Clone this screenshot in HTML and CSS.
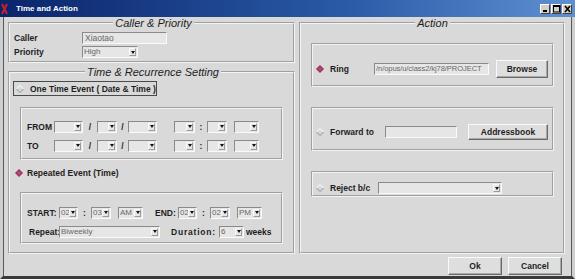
FILE: index.html
```html
<!DOCTYPE html>
<html lang="en">
<head>
    <meta charset="UTF-8">
    <title>Time and Action</title>
    <link rel="stylesheet" href="styles.css">
</head>
<body>
<div class="window">
    <div class="titlebar">
        <svg class="app-icon" width="7" height="12" viewBox="0 0 7 12"><path d="M1 1 L6 11 M6 1 L1 11" stroke="#c8202a" stroke-width="2"/></svg>
        <span class="title">Time and Action</span>
        <div class="wm-buttons">
            <span class="wm-btn"><svg width="7" height="8" viewBox="0 0 7 8"><rect x="1" y="5" width="4" height="2" fill="#000"/></svg></span>
            <span class="wm-btn"><svg width="7" height="8" viewBox="0 0 7 8"><rect x="0.5" y="0.5" width="6" height="6.5" fill="none" stroke="#000"/><rect x="0" y="0" width="7" height="2" fill="#000"/></svg></span>
            <span class="wm-btn"><svg width="7" height="8" viewBox="0 0 7 8"><path d="M1 1 L6 7 M6 1 L1 7" stroke="#000" stroke-width="1.6"/></svg></span>
        </div>
    </div>

    <div class="frame">
        <div class="content">
            <div class="left-col">
                <fieldset class="group caller-group">
                    <legend>Caller &amp; Priority</legend>
                    <div class="form-row">
                        <span class="label caller-label">Caller</span>
                        <span class="field caller-field">Xiaotao</span>
                    </div>
                    <div class="form-row">
                        <span class="label caller-label">Priority</span>
                        <span class="combo w56"><span class="val">High</span><span class="arrow"></span></span>
                    </div>
                </fieldset>

                <fieldset class="group time-group">
                    <legend>Time &amp; Recurrence Setting</legend>
                    <div class="radio-row focused">
                        <svg class="radio" width="8" height="8" viewBox="0 0 8 8"><path d="M0.5 4 L4 0.5 L7.5 4" fill="none" stroke="#fff"/><path d="M0.5 4 L4 7.5 L7.5 4" fill="none" stroke="#8c8c8c"/></svg>
                        <span class="label">One Time Event ( Date &amp; Time )</span>
                    </div>

                    <div class="inner-box date-box">
                        <div class="date-row">
                            <span class="label row-label">FROM</span>
                            <span class="combo w29"><span class="val"></span><span class="arrow"></span></span>
                            <span class="sep w14">/</span>
                            <span class="combo w20"><span class="val"></span><span class="arrow"></span></span>
                            <span class="sep w11">/</span>
                            <span class="combo w29"><span class="val"></span><span class="arrow"></span></span>
                            <span class="combo w21 ml17"><span class="val"></span><span class="arrow"></span></span>
                            <span class="sep w12">:</span>
                            <span class="combo w20"><span class="val"></span><span class="arrow"></span></span>
                            <span class="combo w25 ml7"><span class="val"></span><span class="arrow"></span></span>
                        </div>
                        <div class="date-row">
                            <span class="label row-label">TO</span>
                            <span class="combo w29"><span class="val"></span><span class="arrow"></span></span>
                            <span class="sep w14">/</span>
                            <span class="combo w20"><span class="val"></span><span class="arrow"></span></span>
                            <span class="sep w11">/</span>
                            <span class="combo w29"><span class="val"></span><span class="arrow"></span></span>
                            <span class="combo w21 ml17"><span class="val"></span><span class="arrow"></span></span>
                            <span class="sep w12">:</span>
                            <span class="combo w20"><span class="val"></span><span class="arrow"></span></span>
                            <span class="combo w25 ml7"><span class="val"></span><span class="arrow"></span></span>
                        </div>
                    </div>

                    <div class="radio-row repeated">
                        <svg class="radio" width="8" height="8" viewBox="0 0 8 8"><path d="M4 0 L8 4 L4 8 L0 4 Z" fill="#9a2d5c"/><path d="M4 1.5 L6.5 4 L4 6.5 L1.5 4 Z" fill="#b4486f"/></svg>
                        <span class="label">Repeated Event (Time)</span>
                    </div>

                    <div class="inner-box repeat-box">
                        <div class="date-row">
                            <span class="label start-label">START:</span>
                            <span class="combo w19"><span class="val">02</span><span class="arrow"></span></span>
                            <span class="sep w13">:</span>
                            <span class="combo w20"><span class="val">03</span><span class="arrow"></span></span>
                            <span class="combo w25 ml7"><span class="val">AM</span><span class="arrow"></span></span>
                            <span class="label end-label">END:</span>
                            <span class="combo w19"><span class="val">02</span><span class="arrow"></span></span>
                            <span class="sep w13">:</span>
                            <span class="combo w20"><span class="val">02</span><span class="arrow"></span></span>
                            <span class="combo w25 ml7"><span class="val">PM</span><span class="arrow"></span></span>
                        </div>
                        <div class="date-row">
                            <span class="label repeat-label">Repeat:</span>
                            <span class="combo w101"><span class="val">Biweekly</span><span class="arrow"></span></span>
                            <span class="label duration-label">Duration:</span>
                            <span class="combo w25"><span class="val">6</span><span class="arrow"></span></span>
                            <span class="label weeks-label">weeks</span>
                        </div>
                    </div>
                </fieldset>
            </div>

            <fieldset class="group action-group">
                <legend>Action</legend>

                <div class="inner-box action-box ring-box">
                    <div class="action-row">
                        <svg class="radio" width="8" height="8" viewBox="0 0 8 8"><path d="M4 0 L8 4 L4 8 L0 4 Z" fill="#9a2d5c"/><path d="M4 1.5 L6.5 4 L4 6.5 L1.5 4 Z" fill="#b4486f"/></svg>
                        <span class="label ring-label">Ring</span>
                        <span class="field ring-field">/n/opus/u/class2/kj78/PROJECT</span>
                        <button class="btn browse-btn">Browse</button>
                    </div>
                </div>

                <div class="inner-box action-box forward-box">
                    <div class="action-row">
                        <svg class="radio" width="8" height="8" viewBox="0 0 8 8"><path d="M0.5 4 L4 0.5 L7.5 4" fill="none" stroke="#fff"/><path d="M0.5 4 L4 7.5 L7.5 4" fill="none" stroke="#8c8c8c"/></svg>
                        <span class="label forward-label">Forward to</span>
                        <span class="field forward-field"></span>
                        <button class="btn address-btn">Addressbook</button>
                    </div>
                </div>

                <div class="inner-box action-box reject-box">
                    <div class="action-row">
                        <svg class="radio" width="8" height="8" viewBox="0 0 8 8"><path d="M0.5 4 L4 0.5 L7.5 4" fill="none" stroke="#fff"/><path d="M0.5 4 L4 7.5 L7.5 4" fill="none" stroke="#8c8c8c"/></svg>
                        <span class="label reject-label">Reject b/c</span>
                        <span class="combo w124"><span class="val"></span><span class="arrow"></span></span>
                    </div>
                </div>
            </fieldset>
        </div>

        <div class="footer">
            <button class="btn footer-btn">Ok</button>
            <button class="btn footer-btn">Cancel</button>
        </div>
    </div>
</div>
</body>
</html>
```

FILE: styles.css
```css
* {
    box-sizing: border-box;
}

body {
    margin: 0;
    font-family: "Liberation Sans", Arial, sans-serif;
    background-color: #d9d9d9;
}

.window {
    width: 575px;
    height: 279px;
    display: flex;
    flex-direction: column;
    background-color: #d9d9d9;
}

/* title bar */
.titlebar {
    height: 17px;
    display: flex;
    align-items: center;
    padding: 0 3px 0 1px;
    background: linear-gradient(to right, #0a246a, #2a5aa6 60%, #5f90d2);
    color: white;
}

.app-icon {
    margin-right: 8px;
}

.title {
    flex: 1;
    font-size: 8px;
    font-weight: bold;
}

.wm-buttons {
    display: flex;
    gap: 1px;
}

.wm-btn {
    width: 10px;
    height: 10px;
    display: flex;
    align-items: center;
    justify-content: center;
    background-color: #d4d0c8;
    border: 1px solid;
    border-color: #fff #404040 #404040 #fff;
}

/* window frame */
.frame {
    flex: 1;
    display: flex;
    flex-direction: column;
    border: 3px solid #cfcfcf;
    border-top: 0;
    border-bottom-color: #3a3a3a;
    box-shadow: inset 1px 0 #5a5a5a, inset -1px 0 #5a5a5a;
}

.content {
    height: 238px;
    display: flex;
    gap: 4px;
    padding: 0 7px 1px 5px;
}

.left-col {
    width: 287px;
    display: flex;
    flex-direction: column;
    gap: 3px;
}

/* etched groups */
.group {
    margin: 0;
    min-width: 0;
    border: 2px groove #f4f4f4;
}

.group legend {
    margin: 0 auto;
    padding: 0 2px;
    font-size: 11px;
    font-style: italic;
    line-height: 12px;
    color: #1e1e1e;
}

.caller-group {
    padding: 3px 0 3px 4px;
}

.time-group {
    flex: 1;
    padding: 0 0 0 3px;
}

.action-group {
    width: 266px;
    padding: 0 9px 0 10px;
}

.inner-box {
    border: 2px groove #f4f4f4;
}

.label {
    font-size: 8.5px;
    font-weight: bold;
    color: #1e1e1e;
    white-space: nowrap;
}

.form-row {
    height: 12px;
    display: flex;
    align-items: center;
}

.form-row + .form-row {
    margin-top: 2px;
}

.caller-label {
    width: 68px;
}

/* text fields and combo boxes */
.field {
    height: 12px;
    padding-left: 2px;
    font-size: 8.5px;
    line-height: 10px;
    color: #666;
    background-color: #e6e6e6;
    border: 1px solid;
    border-color: #8a8a8a #fafafa #fafafa #8a8a8a;
    overflow: hidden;
    white-space: nowrap;
}

.caller-field {
    width: 85px;
}

.combo {
    height: 12px;
    display: flex;
    background-color: #e6e6e6;
    border: 1px solid;
    border-color: #8a8a8a #fafafa #fafafa #8a8a8a;
    flex-shrink: 0;
}

.combo .val {
    flex: 1;
    min-width: 0;
    padding-left: 1px;
    font-size: 8px;
    line-height: 10px;
    color: #666;
    white-space: nowrap;
}

.combo .arrow {
    width: 7px;
    margin: 1px 1px 1px 0;
    display: flex;
    align-items: center;
    justify-content: center;
    border: 1px solid;
    border-color: #fafafa #9a9a9a #9a9a9a #fafafa;
    flex-shrink: 0;
}

.combo .arrow::after {
    content: "";
    border-top: 3px solid #111;
    border-left: 2px solid transparent;
    border-right: 2px solid transparent;
}

.w19 { width: 19px; }
.w20 { width: 20px; }
.w21 { width: 21px; }
.w25 { width: 25px; }
.w29 { width: 29px; }
.w56 { width: 56px; }
.w101 { width: 101px; }
.w124 { width: 124px; }

.ml7 { margin-left: 7px; }
.ml17 { margin-left: 17px; }

.sep {
    font-size: 8.5px;
    font-weight: bold;
    text-align: center;
    color: #1e1e1e;
}

.sep.w11 { width: 11px; }
.sep.w12 { width: 12px; }
.sep.w13 { width: 13px; }
.sep.w14 { width: 14px; }

/* radio rows */
.radio-row {
    display: flex;
    align-items: center;
}

.radio-row.focused {
    width: 144px;
    height: 15px;
    margin-top: 3px;
    padding-left: 2px;
    border: 1px solid #4a4a4a;
}

.radio-row.focused .radio {
    margin-right: 6px;
}

.radio-row.repeated {
    height: 14px;
    margin-top: 6px;
    padding-left: 2px;
}

.radio-row.repeated .radio {
    margin-right: 4px;
}

.date-box {
    margin: 11px 10px 0 7px;
    padding: 11px 0 6px 5px;
}

.repeat-box {
    margin: 12px 10px 0 7px;
    padding: 12px 0 4px 5px;
}

.date-row {
    height: 13px;
    display: flex;
    align-items: center;
}

.date-row + .date-row {
    margin-top: 6px;
}

.row-label {
    width: 27px;
}

.start-label {
    width: 32px;
}

.end-label {
    width: 23px;
    margin-left: 12px;
}

.repeat-label {
    width: 30px;
    margin-left: 2px;
}

.duration-label {
    width: 48px;
    margin-left: 11px;
    letter-spacing: 0.8px;
}

.weeks-label {
    margin-left: 2px;
}

/* action side */
.action-box {
    padding-left: 3px;
}

.ring-box {
    margin-top: 14px;
    padding-top: 15px;
    padding-bottom: 7px;
}

.forward-box {
    margin-top: 20px;
    padding-top: 15px;
    padding-bottom: 9px;
}

.reject-box {
    margin-top: 20px;
    padding-top: 9px;
    padding-bottom: 1px;
}

.action-row {
    display: flex;
    align-items: center;
}

.action-row .radio {
    margin-right: 6px;
}

.ring-label {
    width: 44px;
}

.ring-field {
    width: 115px;
    margin-right: 7px;
    padding-left: 1px;
    font-size: 7.6px;
    letter-spacing: -0.1px;
}

.forward-label {
    width: 55px;
}

.forward-field {
    width: 72px;
    margin-right: 11px;
}

.reject-label {
    width: 48px;
}

/* buttons */
.btn {
    font-family: "Liberation Sans", Arial, sans-serif;
    font-size: 8.5px;
    font-weight: bold;
    color: #1e1e1e;
    background-color: #dedede;
    padding: 0;
    border: 1px solid;
    border-color: #fafafa #6a6a6a #6a6a6a #fafafa;
    box-shadow: inset -1px -1px #a8a8a8;
}

.browse-btn {
    width: 52px;
    height: 18px;
}

.address-btn {
    width: 80px;
    height: 16px;
}

.footer {
    flex: 1;
    display: flex;
    justify-content: flex-end;
    gap: 6px;
    padding: 2px 10px 0 0;
}

.footer-btn {
    width: 54px;
    height: 18px;
}
```
